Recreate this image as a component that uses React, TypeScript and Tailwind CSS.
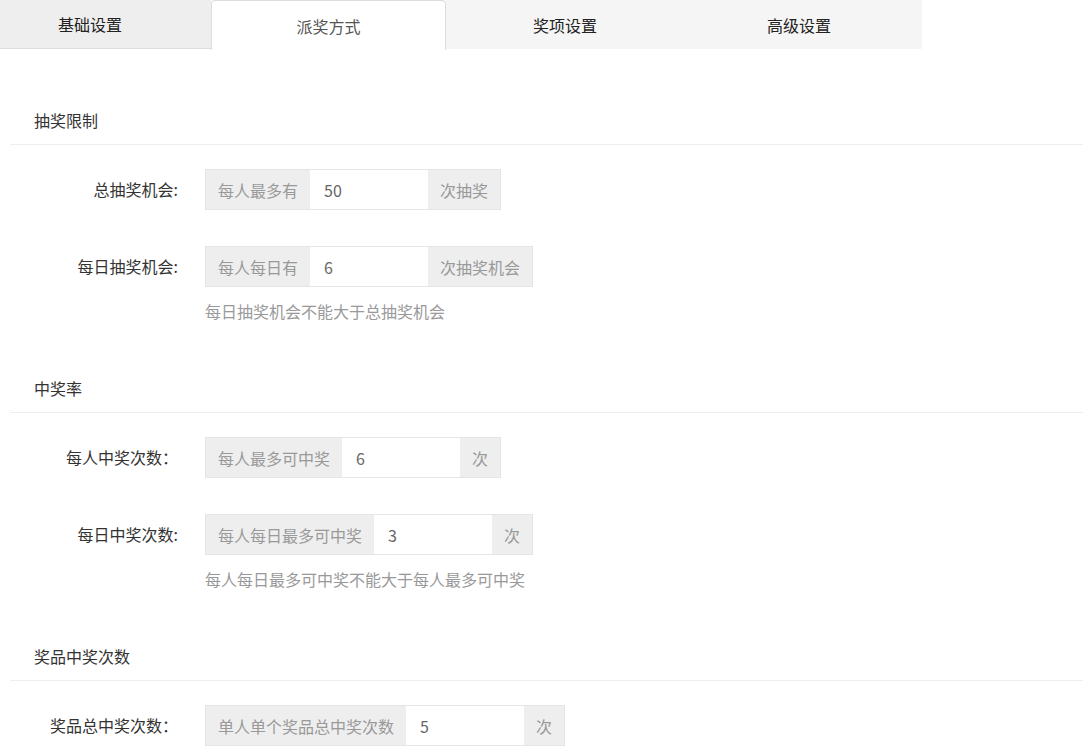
import React from "react";

type Row = { label: string; pre: string; val: string; post: string; help?: string };

const sections: { title: string; rows: Row[] }[] = [
  {
    title: "抽奖限制",
    rows: [
      { label: "总抽奖机会:", pre: "每人最多有", val: "50", post: "次抽奖" },
      { label: "每日抽奖机会:", pre: "每人每日有", val: "6", post: "次抽奖机会", help: "每日抽奖机会不能大于总抽奖机会" },
    ],
  },
  {
    title: "中奖率",
    rows: [
      { label: "每人中奖次数：", pre: "每人最多可中奖", val: "6", post: "次" },
      { label: "每日中奖次数:", pre: "每人每日最多可中奖", val: "3", post: "次", help: "每人每日最多可中奖不能大于每人最多可中奖" },
    ],
  },
  {
    title: "奖品中奖次数",
    rows: [{ label: "奖品总中奖次数：", pre: "单人单个奖品总中奖次数", val: "5", post: "次" }],
  },
];

const font = { fontFamily: '"Microsoft YaHei", "Noto Sans CJK SC", sans-serif' };

export default function App() {
  return (
    <div className="w-[1083px] h-[747px] overflow-hidden bg-white" style={font}>
      <div className="flex h-[49px]">
        <div className="w-[211px] bg-[#eeeeee] border-b border-[#dddddd] flex items-center pl-[58px] text-[16px] text-[#222]">基础设置</div>
        <div className="w-[235px] h-[50px] bg-white border border-b-0 border-[#dddddd] rounded-t-[4px] flex items-center justify-center text-[16px] text-[#555]">派奖方式</div>
        <div className="w-[476px] bg-[#f5f5f5] flex items-center text-[16px] text-[#222]">
          <span className="ml-[87px]">奖项设置</span>
          <span className="ml-[170px]">高级设置</span>
        </div>
        <div className="flex-1" />
      </div>
      <div className="pt-[56px]">
        {sections.map((s) => (
          <div key={s.title} className="mb-[50px]">
            <div className="ml-[10px] border-b border-[#eeeeee] pl-[24px] h-[40px] text-[16px] text-[#333] leading-[30px]">{s.title}</div>
            <div className="pt-[24px]">
              {s.rows.map((r) => (
                <div key={r.label} className="flex mb-[36px] last:mb-0">
                  <div className="w-[180px] text-right text-[16px] text-[#333] leading-[40px] pr-[2px]">{r.label}</div>
                  <div className="ml-[25px]">
                    <div className="flex h-[41px] border border-[#e5e5e5] text-[16px]">
                      <div className="bg-[#eeeeee] text-[#999] px-[12px] flex items-center">{r.pre}</div>
                      <div className="w-[118px] bg-white text-[#666] px-[14px] flex items-center">{r.val}</div>
                      <div className="bg-[#eeeeee] text-[#999] px-[12px] flex items-center">{r.post}</div>
                    </div>
                    {r.help && <div className="mt-[12px] text-[16px] text-[#999]">{r.help}</div>}
                  </div>
                </div>
              ))}
            </div>
          </div>
        ))}
      </div>
    </div>
  );
}
